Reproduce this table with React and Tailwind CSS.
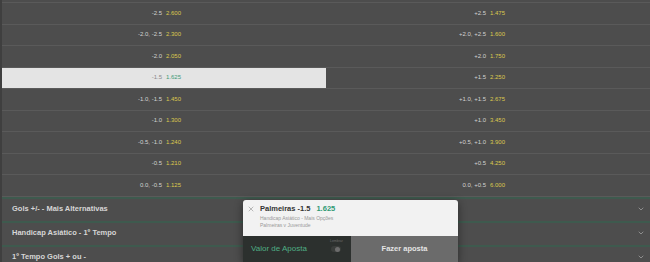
import { ChevronDown, X } from "lucide-react";

const rows = [
  { home: "-2.5", homeOdds: "2.600", away: "+2.5", awayOdds: "1.475" },
  { home: "-2.0, -2.5", homeOdds: "2.300", away: "+2.0, +2.5", awayOdds: "1.600" },
  { home: "-2.0", homeOdds: "2.050", away: "+2.0", awayOdds: "1.750" },
  { home: "-1.5", homeOdds: "1.625", away: "+1.5", awayOdds: "2.250", selected: true },
  { home: "-1.0, -1.5", homeOdds: "1.450", away: "+1.0, +1.5", awayOdds: "2.675" },
  { home: "-1.0", homeOdds: "1.300", away: "+1.0", awayOdds: "3.450" },
  { home: "-0.5, -1.0", homeOdds: "1.240", away: "+0.5, +1.0", awayOdds: "3.900" },
  { home: "-0.5", homeOdds: "1.210", away: "+0.5", awayOdds: "4.250" },
  { home: "0.0, -0.5", homeOdds: "1.125", away: "0.0, +0.5", awayOdds: "6.000" },
];

const markets = [
  "Gols +/- - Mais Alternativas",
  "Handicap Asiático - 1º Tempo",
  "1º Tempo Gols + ou -",
];

const OddsCell = ({ label, odds, selected }) => (
  <div
    className={`flex-1 flex items-center ${
      selected ? "bg-[#e4e4e4]" : ""
    }`}
  >
    <span
      className={`flex-1 text-right pr-[2px] ${
        selected ? "text-[#8a8a8a]" : "text-[#d2d2d2]"
      }`}
    >
      {label}
    </span>
    <span
      className={`flex-1 pl-[2px] ${
        selected ? "text-[#3f9b78]" : "text-[#dcc84e]"
      }`}
    >
      {odds}
    </span>
  </div>
);

const BetSlip = () => (
  <div className="absolute left-[243px] top-[200px] w-[215px] h-[62px] rounded-t-[3px] overflow-hidden shadow-[0_2px_8px_rgba(0,0,0,0.45)] flex flex-col">
    <div className="h-[36px] shrink-0 bg-[#f2f2f2] flex items-start pl-[4px] pt-[4px]">
      <X className="w-[8px] h-[8px] text-[#999] mt-[1px]" strokeWidth={2} />
      <div className="ml-[5px] flex flex-col">
        <div className="flex items-baseline gap-[6px] font-bold text-[7.5px] leading-[9px]">
          <span className="text-[#333]">Palmeiras -1.5</span>
          <span className="text-[#2f9a72]">1.625</span>
        </div>
        <span className="text-[5px] leading-[8px] text-[#999] mt-[1px]">
          Handicap Asiático - Mais Opções
        </span>
        <span className="text-[5px] leading-[7px] text-[#999]">
          Palmeiras v Juventude
        </span>
      </div>
    </div>
    <div className="flex-1 flex">
      <div className="w-[108px] bg-[#2c302e] flex items-center pl-[8px] relative">
        <span className="text-[8px] text-[#4fae84]">Valor de Aposta</span>
        <div className="absolute right-[8px] top-[3px] flex flex-col items-center">
          <span className="text-[3.5px] leading-[5px] text-[#6a6a6a]">Lembrar</span>
          <div className="mt-[2px] w-[10px] h-[6px] rounded-full bg-[#3a3d3b] flex items-center justify-end pr-[1px]">
            <div className="w-[5px] h-[5px] rounded-full bg-[#6c6c6c]" />
          </div>
        </div>
      </div>
      <div className="flex-1 bg-[#6b6b6b] flex items-center justify-center">
        <span className="text-[7.5px] font-bold text-[#e4e4e4]">Fazer aposta</span>
      </div>
    </div>
  </div>
);

export default function App() {
  return (
    <div className="relative w-[650px] h-[262px] overflow-hidden bg-[#4d4d4d] font-['Liberation_Sans',Arial,sans-serif]">
      <div className="flex h-full">
        <div className="w-[2px] shrink-0 bg-[#3f3f3f]" />
        <div className="flex-1 flex flex-col">
          <div className="h-[3px] shrink-0 border-b border-[#5a5a5a]" />
          {rows.map((r) => (
            <div
              key={r.home}
              className="h-[21.5px] shrink-0 flex border-b border-[#5a5a5a] text-[6px]"
            >
              <OddsCell label={r.home} odds={r.homeOdds} selected={r.selected} />
              <OddsCell label={r.away} odds={r.awayOdds} />
            </div>
          ))}
          {markets.map((m) => (
            <div
              key={m}
              className="h-[24px] shrink-0 flex items-center justify-between border-t-2 border-[#3e5a4e] pl-[10px] pr-[5px] pb-[1px]"
            >
              <span className="text-[7.5px] font-bold text-[#d6d6d6]">{m}</span>
              <ChevronDown className="w-[8px] h-[8px] text-[#9a9a9a]" strokeWidth={2.5} />
            </div>
          ))}
        </div>
      </div>
      <BetSlip />
    </div>
  );
}
